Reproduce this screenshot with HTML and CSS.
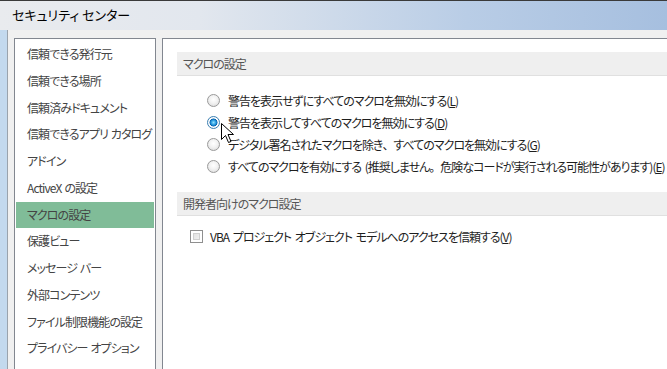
FILE: index.html
```html
<!DOCTYPE html>
<html lang="ja">
<head>
    <meta charset="UTF-8">
    <title>セキュリティ センター</title>
    <link rel="stylesheet" href="styles.css">
</head>
<body>
    <div class="window">
        <div class="titlebar">セキュリティ センター</div>
        <div class="frame">
            <div class="client">
                <ul class="nav">
                    <li>信頼できる発行元</li>
                    <li>信頼できる場所</li>
                    <li>信頼済みドキュメント</li>
                    <li>信頼できるアプリ カタログ</li>
                    <li>アドイン</li>
                    <li>ActiveX の設定</li>
                    <li class="active">マクロの設定</li>
                    <li>保護ビュー</li>
                    <li>メッセージ バー</li>
                    <li>外部コンテンツ</li>
                    <li>ファイル制限機能の設定</li>
                    <li>プライバシー オプション</li>
                </ul>
                <div class="content">
                    <div class="section-head">マクロの設定</div>
                    <div class="options">
                        <div class="row"><span class="radio"></span>警告を表示せずにすべてのマクロを無効にする(<u>L</u>)</div>
                        <div class="row"><span class="radio checked"></span>警告を表示してすべてのマクロを無効にする(<u>D</u>)</div>
                        <div class="row"><span class="radio"></span>デジタル署名されたマクロを除き<span class="punct">、</span>すべてのマクロを無効にする(<u>G</u>)</div>
                        <div class="row"><span class="radio"></span>すべてのマクロを有効にする (推奨しません<span class="punct">。</span>危険なコードが実行される可能性があります)(<u>E</u>)</div>
                    </div>
                    <div class="section-head">開発者向けのマクロ設定</div>
                    <div class="checks">
                        <div class="row"><span class="checkbox"></span>VBA プロジェクト オブジェクト モデルへのアクセスを信頼する(<u>V</u>)</div>
                    </div>
                </div>
            </div>
        </div>
        <svg class="cursor" width="14" height="22" viewBox="0 0 14 22">
            <path d="M0.5 0.5 L0.5 16.5 L4.5 12.5 L7.5 19.5 L10 18.5 L7 11.5 L12.5 11.5 Z" fill="#fff" stroke="#000" stroke-width="1"/>
        </svg>
    </div>
</body>
</html>
```

FILE: styles.css
```css
* {
    box-sizing: border-box;
}
html, body {
    margin: 0;
    height: 100%;
    overflow: hidden;
}
body {
    font-family: "Noto Sans CJK JP", "Noto Sans", sans-serif;
    font-feature-settings: "palt";
    font-size: 12px;
    color: #1e1e1e;
}
.window {
    position: relative;
    height: 100%;
    display: flex;
    flex-direction: column;
}
.titlebar {
    height: 30px;
    flex: none;
    border-top: 1px solid #3a3a3a;
    padding-left: 12px;
    line-height: 28px;
    font-size: 13px;
    color: #000;
    background: linear-gradient(to right, #e9ebee 0%, #e2e7ee 30%, #b9cde6 70%, #a6bfdf 100%);
}
.frame {
    flex: 1;
    display: flex;
    border-left: 7px solid #c3d9ee;
}
.client {
    flex: 1;
    display: flex;
    gap: 6px;
    padding: 8px 0 0 6px;
    background: #f0f0f0;
    border-left: 1px solid #9aa3ad;
}
.nav {
    width: 142px;
    flex: none;
    margin: 0;
    padding: 2px 1px 0;
    list-style: none;
    background: #fff;
    border: 1px solid #828790;
    border-bottom: none;
}
.nav li {
    height: 26.75px;
    line-height: 26px;
    padding-left: 11px;
    color: #444;
    letter-spacing: -0.9px;
    word-spacing: 1px;
    white-space: nowrap;
}
.nav li.active {
    background: #80bc98;
}
.content {
    flex: 1;
    padding: 13px 0 0 14px;
    background: #fff;
    border: 1px solid #828790;
    border-right: none;
    border-bottom: none;
    white-space: nowrap;
    letter-spacing: -1px;
    word-spacing: 2px;
}
.punct {
    font-feature-settings: normal;
}
.section-head {
    height: 24px;
    line-height: 23px;
    padding-left: 6px;
    background: #efefef;
    border-bottom: 1px solid #e0e0e0;
    color: #555;
}
.options {
    padding: 13px 0 15px 30px;
}
.checks {
    padding: 9px 0 0 13px;
}
.row {
    height: 22px;
    display: flex;
    align-items: center;
}
.radio {
    width: 13px;
    height: 13px;
    margin-right: 8px;
    border-radius: 50%;
    border: 1px solid #9a9a9a;
    background: radial-gradient(circle at 50% 40%, #ffffff 0%, #f2f2f2 45%, #d6d6d6 100%);
    flex: none;
}
.radio.checked {
    border-color: #3c7fb1;
    background: radial-gradient(circle, #8fe0ff 0%, #1a8fd8 35%, #0b5ea8 48%, #ffffff 55%, #e6f2fb 100%);
}
.checkbox {
    width: 13px;
    height: 13px;
    margin-right: 7px;
    border: 1px solid #8f8f8f;
    background: linear-gradient(135deg, #dcdcdc, #f7f7f7);
    box-shadow: inset 0 0 0 2px #fff, inset 0 0 0 3px #d0d0d0;
    flex: none;
}
.cursor {
    position: absolute;
    left: 221px;
    top: 123px;
}
```
